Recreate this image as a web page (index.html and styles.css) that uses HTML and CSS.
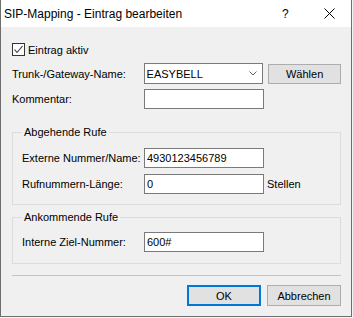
FILE: index.html
```html
<!DOCTYPE html>
<html lang="de">
<head>
  <meta charset="UTF-8">
  <meta name="viewport" content="width=device-width, initial-scale=1.0">
  <title>SIP-Mapping - Eintrag bearbeiten</title>
  <link rel="stylesheet" href="styles.css">
</head>
<body>
  <div class="window">
    <div class="titlebar">
      <span class="title">SIP-Mapping - Eintrag bearbeiten</span>
      <span class="help">?</span>
      <span class="close">
        <svg width="11" height="11" viewBox="0 0 11 11"><path d="M0.5 0.5 L10.5 10.5 M10.5 0.5 L0.5 10.5" stroke="#000" stroke-width="1" fill="none"/></svg>
      </span>
    </div>

    <div class="content">
      <label class="check-row">
        <span class="checkbox">
          <svg width="11" height="11" viewBox="0 0 11 11"><path d="M1.5 5.5 L4 8.5 L9.5 2" stroke="#333" stroke-width="1.1" fill="none"/></svg>
        </span>
        Eintrag aktiv
      </label>

      <div class="row row-trunk">
        <span class="label">Trunk-/Gateway-Name:</span>
        <div class="combo">
          <span>EASYBELL</span>
          <svg width="8" height="5" viewBox="0 0 8 5"><path d="M0.5 0.5 L4 4 L7.5 0.5" stroke="#666" stroke-width="1" fill="none"/></svg>
        </div>
        <button class="btn btn-pick">Wählen</button>
      </div>

      <div class="row row-comment">
        <span class="label">Kommentar:</span>
        <input class="field" type="text">
      </div>

      <fieldset class="group group-out">
        <legend>Abgehende Rufe</legend>
        <div class="row">
          <span class="label">Externe Nummer/Name:</span>
          <input class="field" type="text" value="4930123456789">
        </div>
        <div class="row row-gap">
          <span class="label">Rufnummern-Länge:</span>
          <input class="field" type="text" value="0">
          <span class="unit">Stellen</span>
        </div>
      </fieldset>

      <fieldset class="group group-in">
        <legend>Ankommende Rufe</legend>
        <div class="row">
          <span class="label">Interne Ziel-Nummer:</span>
          <input class="field" type="text" value="600#">
        </div>
      </fieldset>

      <div class="separator"></div>

      <div class="buttons">
        <button class="btn btn-default">OK</button>
        <button class="btn">Abbrechen</button>
      </div>
    </div>
  </div>
</body>
</html>
```

FILE: styles.css
```css
body {
  margin: 0;
  background: #f4f4f4;
  font-family: "Liberation Sans", Arial, sans-serif;
  font-size: 11px;
  color: #000;
}
.window {
  width: 352px;
  height: 317px;
  box-sizing: border-box;
  border: 1px solid #6e6e6e;
  border-top: none;
  background: #f0f0f0;
}
.titlebar {
  height: 27px;
  background: #fff;
  display: flex;
  align-items: center;
  font-size: 12px;
}
.title {
  padding-left: 3px;
  flex: 1;
}
.help {
  width: 12px;
  margin-right: 30px;
}
.close {
  display: flex;
  margin-right: 16px;
}
.content {
  padding: 16px 10px 0 11px;
}
.check-row {
  display: flex;
  align-items: center;
  height: 13px;
  gap: 3px;
}
.checkbox {
  width: 11px;
  height: 11px;
  border: 1px solid #333;
  background: #fff;
  display: flex;
}
.row {
  display: flex;
  align-items: center;
  height: 20px;
}
.label {
  width: 132px;
}
.row-trunk {
  margin-top: 7px;
  height: 21px;
}
.row-comment {
  margin-top: 5px;
}
.combo {
  width: 120px;
  height: 21px;
  box-sizing: border-box;
  border: 1px solid #7a7a7a;
  background: #fff;
  display: flex;
  align-items: center;
  justify-content: space-between;
  padding: 0 5px 0 2px;
}
.field {
  width: 120px;
  height: 20px;
  box-sizing: border-box;
  border: 1px solid #7a7a7a;
  background: #fff;
  font: inherit;
  padding: 0 2px;
  margin: 0;
  outline: none;
}
.btn {
  font: inherit;
  height: 21px;
  width: 74px;
  margin: 0;
  padding: 0;
  border: 1px solid #adadad;
  background: #e1e1e1;
  color: #000;
}
.btn-pick {
  margin-left: 5px;
  width: 73px;
  height: 20px;
}
.btn-default {
  border: 2px solid #0078d7;
}
.group {
  margin: 0;
  padding: 0 9px 0 9px;
  border: 1px solid #dcdcdc;
}
.group legend {
  padding: 0 2px;
  line-height: 13px;
}
.group .label {
  width: 122px;
}
.group-out {
  margin-top: 17px;
  padding-top: 9px;
  padding-bottom: 10px;
}
.group-in {
  margin-top: 6px;
  padding-top: 8px;
  padding-bottom: 11px;
}
.row-gap {
  margin-top: 6px;
}
.unit {
  margin-left: 3px;
}
.separator {
  margin-top: 11px;
  border-top: 1px solid #c4c4c4;
}
.buttons {
  display: flex;
  justify-content: flex-end;
  gap: 6px;
  margin-top: 9px;
}
```
